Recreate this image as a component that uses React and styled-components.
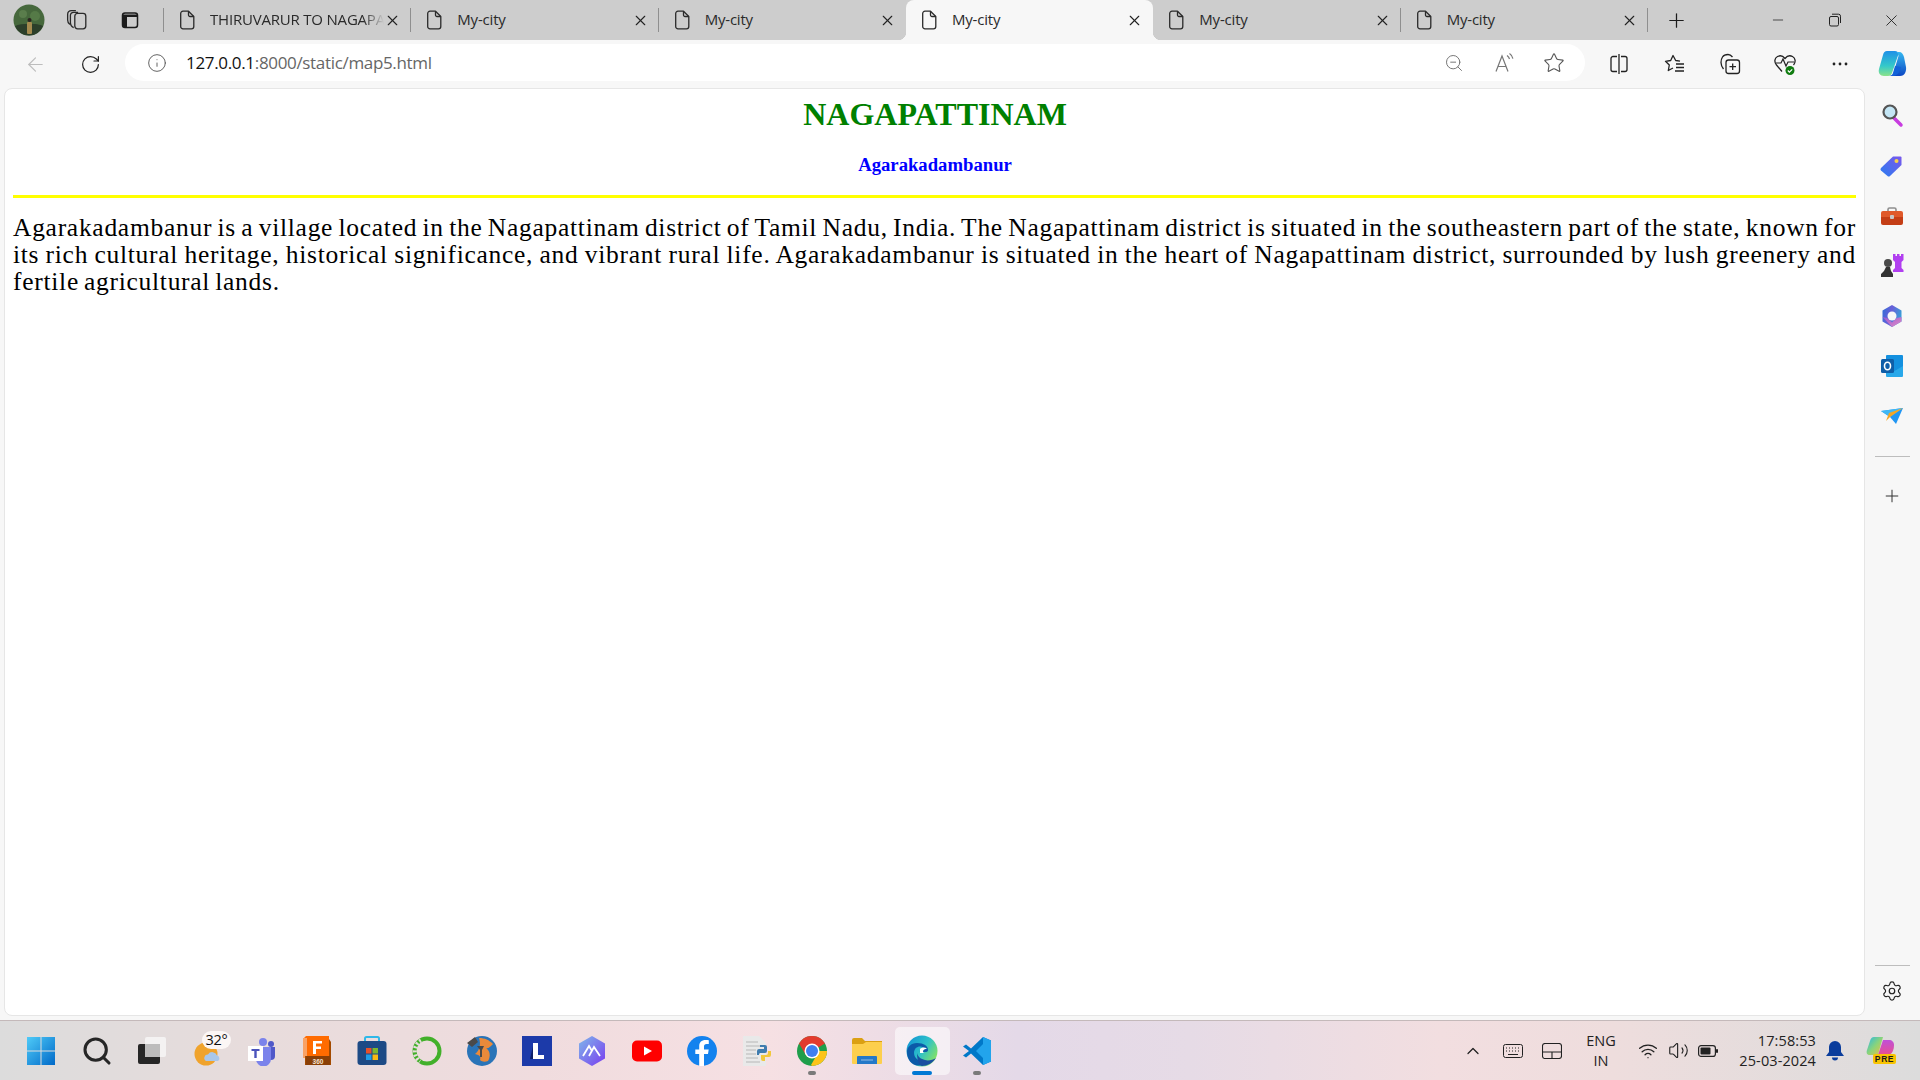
import React from "react";
import styled, { createGlobalStyle } from "styled-components";
import { ArrowLeft, ChevronUp, Info, Minus, Plus, RotateCw, Search, Settings, Star, Volume2, Wifi, X, ZoomOut } from "lucide-react";

const GlobalStyle = createGlobalStyle`
    html, body {
        margin: 0;
        padding: 0;
        overflow: hidden;
    }
    * {
        box-sizing: border-box;
    }
`

const Screen = styled.div`
    width: 1920px;
    height: 1080px;
    display: flex;
    flex-direction: column;
    background-color: #f7f7f7;
    font-family: "Open Sans", "Noto Sans", sans-serif;
`

const TabStrip = styled.div`
    height: 40px;
    flex: none;
    display: flex;
    align-items: stretch;
    background-color: #cdcdcd;
    color: #1c1c1c;
`

const StripButton = styled.div`
    width: ${(p) => p.$w}px;
    display: flex;
    align-items: center;
    justify-content: center;
    flex: none;
`

const StripDivider = styled.div`
    width: 1px;
    height: 24px;
    align-self: center;
    background-color: #8f8f8f;
    flex: none;
`

const Tabs = styled.div`
    width: 1484px;
    display: grid;
    grid-template-columns: repeat(6, minmax(0, 1fr));
    flex: none;
`

const Tab = styled.div`
    position: relative;
    display: flex;
    align-items: center;
    min-width: 0;
    padding: 0 10px 0 14px;
    background-color: ${(p) => (p.$active ? "#f7f7f7" : "transparent")};
    border-radius: ${(p) => (p.$active ? "8px 8px 0 0" : "0")};

    &::after {
        content: "";
        display: ${(p) => (p.$divider ? "block" : "none")};
        position: absolute;
        right: 0;
        top: 8px;
        width: 1px;
        height: 24px;
        background-color: #8f8f8f;
    }
`

const TabFoot = styled.span`
    position: absolute;
    bottom: 0;
    ${(p) => p.$side}: -8px;
    width: 8px;
    height: 8px;
    background: radial-gradient(circle at ${(p) => (p.$side === "left" ? "0 0" : "100% 0")}, transparent 8px, #f7f7f7 8.5px);
`

const TabTitle = styled.span`
    flex: 1;
    min-width: 0;
    margin-left: 14px;
    padding-bottom: 2px;
    font-size: 15px;
    letter-spacing: -0.2px;
    white-space: nowrap;
    overflow: hidden;
    color: #2a2a2a;
    mask-image: ${(p) => (p.$fade ? "linear-gradient(to right, #000 88%, transparent 100%)" : "none")};
`

const WindowControls = styled.div`
    margin-left: auto;
    display: flex;
    flex: none;
`

const WindowButton = styled.div`
    width: 57px;
    display: flex;
    align-items: center;
    justify-content: center;
    flex: none;
`

const Toolbar = styled.div`
    height: 48px;
    flex: none;
    display: flex;
    align-items: center;
    background-color: #f7f7f7;
    color: #222;
`

const ToolButton = styled.div`
    width: ${(p) => p.$w || 55}px;
    display: flex;
    align-items: center;
    justify-content: center;
    flex: none;
`

const AddressBar = styled.div`
    width: 1460px;
    height: 37px;
    margin-top: -3px;
    flex: none;
    display: flex;
    align-items: center;
    padding: 0 0 0 22px;
    background-color: #ffffff;
    border-radius: 19px;
    color: #666;
`

const Url = styled.div`
    flex: 1;
    margin-left: 19px;
    font-size: 17px;
    letter-spacing: -0.33px;
    color: #666;

    b {
        font-weight: 400;
        color: #111;
    }
`

const AddressAction = styled.div`
    width: 50px;
    display: flex;
    align-items: center;
    justify-content: center;
    margin-top: 1px;
`

const Body = styled.div`
    flex: 1;
    min-height: 0;
    display: flex;
    padding-bottom: 4px;
`

const Page = styled.main`
    width: 1861px;
    margin-left: 4px;
    padding: 0 8px;
    background-color: #ffffff;
    border: 1px solid #e6e6e6;
    border-radius: 8px;
    font-family: "Liberation Serif", "Times New Roman", serif;
    color: #000;
`

const Heading = styled.h1`
    margin: 7px 0 0 0;
    padding-left: 1px;
    font-size: 32px;
    line-height: 37px;
    font-weight: 700;
    text-align: center;
    color: #008000;
`

const SubHeading = styled.h3`
    margin: 21px 0 0 0;
    padding-left: 1px;
    font-size: 18.7px;
    line-height: 21px;
    font-weight: 700;
    text-align: center;
    color: #0000ff;
`

const Rule = styled.div`
    height: 3px;
    margin-top: 20px;
    background-color: #ffff00;
`

const Paragraph = styled.p`
    margin: 16px 0 0 0;
    font-size: 25.5px;
    line-height: 27px;
    letter-spacing: 0.72px;
    word-spacing: -2px;
    text-align: justify;
`

const Sidebar = styled.aside`
    flex: 1;
    display: flex;
    flex-direction: column;
    align-items: center;
    padding-top: 3px;
    padding-right: 1px;
`

const SideSlot = styled.div`
    height: ${(p) => p.$h || 50}px;
    width: 100%;
    flex: none;
    display: flex;
    align-items: center;
    justify-content: center;
`

const SideDivider = styled.div`
    width: 35px;
    height: 1px;
    flex: none;
    background-color: #bdbdbd;
    margin-top: ${(p) => p.$top};
`

const Taskbar = styled.footer`
    height: 60px;
    flex: none;
    display: flex;
    align-items: center;
    padding: 0 24px 0 14.5px;
    border-top: 1px solid #c4b9ba;
    background: linear-gradient(to right, #dcdcdc 0%, #e8dcdc 14%, #f0dcde 28%, #f6e0e3 40%, #e4d9e8 53%, #e6dbe6 62%, #f2dee0 75%, #eedddd 84%, #dcdcdc 100%);
`

const TaskSlot = styled.div`
    position: relative;
    width: 55px;
    height: 48px;
    flex: none;
    display: flex;
    align-items: center;
    justify-content: center;
    border-radius: 5px;
    background-color: ${(p) => (p.$active ? "rgba(255, 255, 255, 0.55)" : "transparent")};

    &::after {
        content: "";
        display: ${(p) => (p.$state ? "block" : "none")};
        position: absolute;
        bottom: 0;
        left: 50%;
        transform: translateX(-50%);
        width: ${(p) => (p.$state === "active" ? 20 : 8)}px;
        height: 4px;
        border-radius: 2px;
        background-color: ${(p) => (p.$state === "active" ? "#0078d4" : "#7a7a7a")};
    }
`

const WeatherBadge = styled.span`
    position: absolute;
    top: 4px;
    left: 22px;
    padding: 0 4px;
    font-size: 14.5px;
    line-height: 18px;
    letter-spacing: -0.3px;
    border-radius: 9px;
    color: #111;
    background-color: #fbf6f5;
`

const Tray = styled.div`
    margin-left: auto;
    display: flex;
    align-items: center;
    color: #222;
`

const TrayIcon = styled.div`
    width: ${(p) => p.$w}px;
    margin-left: ${(p) => p.$left || 0}px;
    display: flex;
    align-items: center;
    justify-content: center;
    flex: none;
`

const Lang = styled.div`
    width: 60px;
    text-align: center;
    font-size: 14.5px;
    line-height: 20px;
    color: #222;
    flex: none;
`

const Clock = styled.div`
    width: 93px;
    text-align: right;
    font-size: 14.5px;
    line-height: 20px;
    letter-spacing: 0.1px;
    color: #222;
    white-space: nowrap;
    flex: none;
`

const Avatar = () => (
    <svg width="32" height="32" viewBox="0 0 32 32">
        <circle cx="16" cy="16" r="15.5" fill="#46683c" />
        <path d="M2 22a15 15 0 0 0 28 0c-5-3-22-3-28 0z" fill="#2c3f2a" />
        <circle cx="10" cy="10" r="4" fill="#5a7d4c" />
        <circle cx="22" cy="12" r="5" fill="#557a47" />
        <rect x="14" y="18" width="5" height="12" rx="1" fill="#a38a4e" />
        <circle cx="16.5" cy="16" r="2" fill="#2a2320" />
    </svg>
)

const Workspaces = () => (
    <svg width="22" height="22" viewBox="0 0 20 20" fill="none" stroke="#2a2a2a" strokeWidth="1.2">
        <rect x="8" y="4" width="10" height="14" rx="2.5" />
        <path d="M7 17c-2-1-3-3-3-5V6c0-2 1-3 3-3h4" />
        <path d="M3.5 14C2 13 1.5 11 1.5 10V5c0-2 1.5-3.5 3.5-3.5h4" />
    </svg>
)

const TabActions = () => (
    <svg width="20" height="20" viewBox="0 0 20 20" fill="none" stroke="#1c1c1c" strokeWidth="1.5">
        <rect x="2.5" y="3" width="15" height="14.5" rx="2.5" />
        <path d="M3 4.5h14v2.5H7v10H3z" fill="#1c1c1c" stroke="none" />
    </svg>
)

const DocIcon = () => (
    <svg width="18" height="20" viewBox="0 0 18 20" fill="none" stroke="#2a2a2a" strokeWidth="1.3" strokeLinejoin="round">
        <path d="M5 1.2h5.5L15.8 6.5V16.5a2.3 2.3 0 0 1-2.3 2.3H5a2.3 2.3 0 0 1-2.3-2.3V3.5A2.3 2.3 0 0 1 5 1.2z" />
        <path d="M10.5 1.2V5a1.5 1.5 0 0 0 1.5 1.5h3.8" />
    </svg>
)

const RestoreIcon = () => (
    <svg width="14" height="14" viewBox="0 0 14 14" fill="none" stroke="#222" strokeWidth="1">
        <rect x="1.5" y="3.5" width="9" height="9.5" rx="1.5" />
        <path d="M4 1.2h6.5a2 2 0 0 1 2 2V10" />
    </svg>
)

const ReadAloud = () => (
    <svg width="22" height="22" viewBox="0 0 22 22" fill="none" stroke="#777" strokeWidth="1.2">
        <path d="M3 19.5L9 4l6 15.5M5 14.5h8" />
        <path d="M14 3.5c1.5 1 2.2 2.2 2.5 3.5M16.5 1.5c2 1.3 3 3.2 3.4 5.2" />
    </svg>
)

const SplitScreen = () => (
    <svg width="20" height="22" viewBox="0 0 20 22" fill="none" stroke="#222" strokeWidth="1.3">
        <path d="M8 3.5H4a2 2 0 0 0-2 2v11a2 2 0 0 0 2 2h4M12 3.5h4a2 2 0 0 1 2 2v11a2 2 0 0 1-2 2h-4" />
        <path d="M10 1v20" />
    </svg>
)

const Favourites = () => (
    <svg width="22" height="22" viewBox="0 0 22 22" fill="none" stroke="#222" strokeWidth="1.3" strokeLinejoin="round">
        <path d="M16 8.200L11.700 7.500 9 2.500 6.700 7.500 1.500 8.300l3.800 3.700-1 5.500 4.700-2.500" />
        <path d="M12 11h8M12 14.500h8M11 18h9" />
    </svg>
)

const Collections = () => (
    <svg width="22" height="22" viewBox="0 0 22 22" fill="none" stroke="#222" strokeWidth="1.3">
        <rect x="7" y="7" width="13.5" height="13.5" rx="2.5" />
        <path d="M13.7 10.5v6.5M10.5 13.7H17" />
        <path d="M4.5 16C3 14 2 12 2 9.5 2 7 2.5 5.5 3.5 4S7 1.5 9 1.5s3 .7 4.5 2.5" />
    </svg>
)

const Health = () => (
    <svg width="24" height="24" viewBox="0 0 24 24" fill="none">
        <path d="M9 19.5L3.5 13C1 10 1.5 6 4.5 4.5S10 4 12 6.5c2-2.500 4.500-3.500 7.500-2S23 10 20.500 13" stroke="#222" strokeWidth="1.3" />
        <path d="M3 11h5l2-4 3 7 2-4h6" stroke="#222" strokeWidth="1.2" />
        <circle cx="17" cy="18.500" r="4.500" fill="#107c10" />
        <path d="M14.800 18.500l1.600 1.600 2.800-2.800" stroke="#fff" strokeWidth="1.200" />
    </svg>
)

const Dots = () => (
    <svg width="16" height="4" viewBox="0 0 16 4" fill="#222">
        <circle cx="2" cy="2" r="1.400" />
        <circle cx="8" cy="2" r="1.400" />
        <circle cx="14" cy="2" r="1.400" />
    </svg>
)

const CopilotMark = ({ size = 30 }) => (
    <svg width={size} height={size} viewBox="0 0 30 30">
        <defs>
            <linearGradient id="copA" x1="0" y1="0" x2="0" y2="1">
                <stop offset="0" stopColor="#1e90e8" />
                <stop offset="0.6" stopColor="#35c9c9" />
                <stop offset="1" stopColor="#8be28a" />
            </linearGradient>
            <linearGradient id="copB" x1="0" y1="0" x2="0" y2="1">
                <stop offset="0" stopColor="#35b8f0" />
                <stop offset="1" stopColor="#0d47c4" />
            </linearGradient>
        </defs>
        <path d="M10 2h8c2 0 3 1 3.500 3L15 24c-.7 2-2 3-4 3H7c-4 0-6-3-5-7l4-14c.6-2.500 2-4 4-4z" fill="url(#copA)" />
        <path d="M19 3h3c3 0 4 2 5 5l2 10c.6 4-1 9-6 9H13c2 0 3-1 3.500-3l5-17c-.4-2-1-4-2.500-4z" fill="url(#copB)" />
        <path d="M12 27c2 0 3.500-1 4-3l2-7 6 1c-1 5-4 9-8 9z" fill="#1262d8" />
    </svg>
)

const MagnifierApp = () => (
    <svg width="24" height="24" viewBox="0 0 24 24">
        <path d="M14 14l7 7" stroke="#c83ce0" strokeWidth="3.500" strokeLinecap="round" />
        <circle cx="10" cy="8" r="6.500" fill="#c4e6f5" stroke="#555" strokeWidth="2.200" />
    </svg>
)

const TagApp = () => (
    <svg width="24" height="24" viewBox="0 0 24 24">
        <defs>
            <linearGradient id="tag" x1="0" y1="1" x2="1" y2="0">
                <stop offset="0" stopColor="#2a7cf0" />
                <stop offset="1" stopColor="#7a58ec" />
            </linearGradient>
        </defs>
        <path d="M1 14L13 2.500h7.500a1 1 0 0 1 1 1V11L10 22a2 2 0 0 1-2.500 0L1 16.500a2 2 0 0 1 0-2.500z" fill="url(#tag)" />
        <circle cx="16.500" cy="7" r="2" fill="#f6d24a" />
    </svg>
)

const ToolboxApp = () => (
    <svg width="24" height="24" viewBox="0 0 24 24">
        <path d="M8 8V5.500A1.500 1.500 0 0 1 9.500 4h5A1.500 1.500 0 0 1 16 5.500V8" fill="none" stroke="#8e8e8e" strokeWidth="1.600" />
        <path d="M1 9a2 2 0 0 1 2-2h18a2 2 0 0 1 2 2v4H1z" fill="#e0592a" />
        <path d="M1 13h22v6a2 2 0 0 1-2 2H3a2 2 0 0 1-2-2z" fill="#c43e16" />
        <rect x="10" y="11" width="4" height="4" rx="1" fill="#c8c8c8" />
    </svg>
)

const ChessApp = () => (
    <svg width="24" height="24" viewBox="0 0 24 24">
        <path d="M13 0h2.500v2H17V0h2.500v2H21V0h2.500v6l-2 2v6l2 2v2H13v-2l2-2V8l-2-2z" fill="#b13ff0" />
        <circle cx="8" cy="9" r="4" fill="#4a4a4a" />
        <path d="M6 13h4l1 4 2 3v3H1v-3l3-3z" fill="#333" />
    </svg>
)

const M365App = () => (
    <svg width="24" height="24" viewBox="0 0 24 24">
        <defs>
            <linearGradient id="m365a" x1="0" y1="0" x2="1" y2="0.300">
                <stop offset="0" stopColor="#2d6fd8" />
                <stop offset="0.500" stopColor="#6a5fd8" />
                <stop offset="1" stopColor="#3a9ad8" />
            </linearGradient>
            <linearGradient id="m365b" x1="0" y1="0" x2="1" y2="1">
                <stop offset="0" stopColor="#9a5ad0" />
                <stop offset="1" stopColor="#e08ac8" />
            </linearGradient>
        </defs>
        <path d="M12 1l9.500 5.500v11L12 23l-9.500-5.500v-11z" fill="url(#m365a)" />
        <path d="M2.500 13l9.500 10 9.500-5.500V13l-5 1-4.500 4.500L7 14z" fill="url(#m365b)" />
        <circle cx="12" cy="12" r="4.500" fill="#f7f7f7" />
    </svg>
)

const OutlookApp = () => (
    <svg width="24" height="24" viewBox="0 0 24 24">
        <rect x="6" y="1" width="17" height="20" rx="1" fill="#1490df" />
        <path d="M6 12l8.500 5 8.500-5v10a1 1 0 0 1-1 1H7a1 1 0 0 1-1-1z" fill="#28a8ea" />
        <rect x="1" y="5" width="13" height="14" rx="1.500" fill="#0f5ea8" />
        <ellipse cx="7.500" cy="12" rx="3" ry="3.800" fill="none" stroke="#fff" strokeWidth="1.600" />
    </svg>
)

const SendApp = () => (
    <svg width="24" height="24" viewBox="0 0 24 24">
        <path d="M1 7l22-3-7 16-6-7z" fill="#2196f3" />
        <path d="M1 7l22-3-13 9z" fill="#40b8f5" />
        <path d="M6 17l4-4 13-9L9 9z" fill="#f5a623" />
    </svg>
)

const WindowsLogo = () => (
    <svg width="30" height="30" viewBox="1 0 30 30">
        <defs>
            <linearGradient id="win" x1="0" y1="0" x2="1" y2="1">
                <stop offset="0" stopColor="#4fcbf8" />
                <stop offset="1" stopColor="#0069c8" />
            </linearGradient>
        </defs>
        <path d="M1 1h13.500v13.500H1zM15.500 1H29v13.500H15.500zM1 15.500h13.500V29H1zM15.500 15.500H29V29H15.500z" fill="url(#win)" />
    </svg>
)

const TaskView = () => (
    <svg width="30" height="30" viewBox="0 0 30 30">
        <rect x="8" y="1" width="21" height="20" rx="2" fill="#f4f2f2" />
        <rect x="1" y="8" width="22" height="20" rx="2" fill="#262626" />
        <rect x="8" y="8" width="15" height="13" fill="#bdbcbc" />
    </svg>
)

const Weather = () => (
    <svg width="30" height="30" viewBox="0 0 30 30">
        <circle cx="14" cy="18" r="11.500" fill="#f0a32c" />
        <path d="M14 25a3.500 3.500 0 0 1 2-6.500 5 5 0 0 1 9 1 3 3 0 0 1 1 5.500z" fill="#a9c7ea" />
    </svg>
)

const Teams = () => (
    <svg width="30" height="30" viewBox="0 0 30 30">
        <circle cx="16" cy="6" r="4" fill="#7b83eb" />
        <circle cx="24" cy="8" r="3" fill="#5059c9" />
        <path d="M20 11h8v9a4 4 0 0 1-8 0z" fill="#5059c9" />
        <path d="M9 11h15v12a6 6 0 0 1-15 0z" fill="#7b83eb" />
        <rect x="1" y="10" width="15" height="15" fill="#fff" />
        <path d="M4.500 13h8v2H9.700v7H7.300v-7H4.500z" fill="#4b53bc" />
    </svg>
)

const Fusion = () => (
    <svg width="30" height="30" viewBox="0 0 30 30">
        <path d="M1 3l3-3h23v20H1z" fill="#ff6b00" />
        <path d="M1 2l4 0v20H1z" fill="#f9a265" />
        <path d="M27 3l2 3v23H3v-9h24z" fill="#a34a00" />
        <rect x="4" y="20" width="24" height="9" fill="#8a3f06" />
        <path d="M11 5h9v2.500h-6v3h5V13h-5v5h-3z" fill="#fff" />
        <text x="16" y="28" textAnchor="middle" fontSize="6.500" fontWeight="700" fill="#f3e3d3" fontFamily="Liberation Sans, sans-serif">360</text>
    </svg>
)

const Store = () => (
    <svg width="30" height="30" viewBox="0 0 30 30">
        <path d="M8 6V2.500A1.500 1.500 0 0 1 9.500 1h11A1.500 1.500 0 0 1 22 2.500V6" fill="none" stroke="#2fb8e8" strokeWidth="2" />
        <rect x="0.500" y="5" width="29" height="24" rx="3" fill="#1d4a85" />
        <rect x="9" y="12" width="5.500" height="5.500" fill="#e8502a" />
        <rect x="15.500" y="12" width="5.500" height="5.500" fill="#7cb82f" />
        <rect x="9" y="18.500" width="5.500" height="5.500" fill="#1e9de8" />
        <rect x="15.500" y="18.500" width="5.500" height="5.500" fill="#f9b912" />
    </svg>
)

const GreenRing = () => (
    <svg width="30" height="30" viewBox="0 0 30 30" fill="none">
        <circle cx="15" cy="15" r="12.500" stroke="#42b02a" strokeWidth="4" />
        <path d="M9 4.500A12.500 12.500 0 0 0 8 25.500" stroke="#e7dcdc" strokeWidth="4" strokeDasharray="2 2" />
    </svg>
)

const Blender = () => (
    <svg width="30" height="30" viewBox="0 0 30 30">
        <circle cx="15" cy="15" r="15" fill="#2a74b8" />
        <path d="M8 18c5-4 6-10 4-16 6 0 10 2 14 6-3 3-5 5-7 4 4 3 5 8 2 13-3 1-6 1-8-1 1-3 0-5-5-6z" fill="#ea8a3a" />
        <path d="M0 7l8-6 3 5-6 5zM10 10h7l-2 4v7h-2v-7z" fill="#4a4a4a" />
    </svg>
)

const LetterL = () => (
    <svg width="30" height="30" viewBox="0 0 30 30">
        <rect width="30" height="30" fill="#1c3aa9" />
        <path d="M11 7h5v12h6v4H11z" fill="#fff" />
        <path d="M11 10v13H8z" fill="#0e1f66" />
    </svg>
)

const Mesh = () => (
    <svg width="30" height="30" viewBox="0 0 30 30">
        <defs>
            <linearGradient id="mesh" x1="0" y1="0" x2="1" y2="1">
                <stop offset="0" stopColor="#7fb8ea" />
                <stop offset="1" stopColor="#7a3cf0" />
            </linearGradient>
        </defs>
        <path d="M15 0l13 7.500v15L15 30 2 22.500v-15z" fill="url(#mesh)" />
        <path d="M6 20l6-10 3 5M12 20l5-9 6 9" fill="none" stroke="#fff" strokeWidth="1.800" />
    </svg>
)

const YouTube = () => (
    <svg width="30" height="22" viewBox="0 0 30 22">
        <rect width="30" height="21" y="0.500" rx="5" fill="#ff0000" />
        <path d="M12 6.500l8 4.500-8 4.500z" fill="#fff" />
    </svg>
)

const Facebook = () => (
    <svg width="30" height="30" viewBox="0 0 30 30">
        <circle cx="15" cy="15" r="15" fill="#1382ee" />
        <path d="M17 30V18h4l.7-4.500H17v-3c0-1.500.7-2.500 2.500-2.500h2.300V4.200C21 4 19.800 4 18.500 4c-3.800 0-6.300 2.200-6.300 6.200v3.300H8.300V18h3.900v12z" fill="#fff" />
    </svg>
)

const PythonFile = () => (
    <svg width="30" height="30" viewBox="0 0 30 30">
        <path d="M1 0h16l7 7v23H1z" fill="#e9e9e9" />
        <path d="M4 6h12M4 10h14M4 14h10M4 18h10M4 22h12M4 26h14" stroke="#c8c8c8" strokeWidth="1.500" />
        <path d="M15 19v-4a2 2 0 0 1 2-2h5v-2h-4V9h5a2 2 0 0 1 2 2v4a2 2 0 0 1-2 2h-5a2 2 0 0 0-1 2z" fill="#3f7cae" />
        <path d="M29 15v4a2 2 0 0 1-2 2h-4v4h-2a2 2 0 0 1-2-2v-4h5a2 2 0 0 0 2-2v-2h3z" fill="#f2c83c" />
    </svg>
)

const Chrome = () => (
    <svg width="30" height="30" viewBox="0 0 30 30">
        <circle cx="15" cy="15" r="15" fill="#1f9e4b" />
        <path d="M15 15L28 7.500A15 15 0 0 0 2 7.500l6.500 11z" fill="#e33b2e" />
        <path d="M15 15h15A15 15 0 0 1 15 30l-1-1 7.500-13z" fill="#fcc419" />
        <circle cx="15" cy="15" r="7.500" fill="#fff" />
        <circle cx="15" cy="15" r="6" fill="#3f7ff0" />
    </svg>
)

const Folder = () => (
    <svg width="30" height="28" viewBox="0 0 30 28">
        <path d="M0 3a2 2 0 0 1 2-2h8l3 3h17v20H0z" fill="#dba013" />
        <path d="M0 7h11l3-2h16v21a1 1 0 0 1-1 1H1a1 1 0 0 1-1-1z" fill="#fdcf4d" />
        <path d="M5 20a1 1 0 0 1 1-1h18a1 1 0 0 1 1 1v7H5z" fill="#2478c8" />
        <path d="M9 23h12" stroke="#fff" strokeOpacity="0.500" strokeWidth="1" />
    </svg>
)

const Edge = () => (
    <svg width="32" height="32" viewBox="0 0 32 32">
        <defs>
            <linearGradient id="edgeA" x1="0" y1="0" x2="1" y2="0.600">
                <stop offset="0" stopColor="#0f8fd6" />
                <stop offset="0.600" stopColor="#2fc2c8" />
                <stop offset="1" stopColor="#7fe06a" />
            </linearGradient>
        </defs>
        <circle cx="16" cy="16" r="15.500" fill="url(#edgeA)" />
        <path d="M1 17c0-5 4-9 10-9 7 0 11 3 11 7 0 1.500-1 2-3 2h-5c-1-3 4-3 4-4-3-3-10-2-10 5 0 6 7 10 14 9-3 3-7 4-10 3.500C6 30.500 1 25 1 17z" fill="#0c5aa8" />
        <path d="M14 14c2-2 5-2 7-.5-2 .5-4 1-4 3 0 1 1 1.500 2 1.500h-5z" fill="#fff" />
        <path d="M16 31c5 0 11-3 14-8-3 2-8 3-11 2-4-1-7-3-8-7 0 7 2 12 5 13z" fill="#1a4fa0" />
    </svg>
)

const VSCode = () => (
    <svg width="30" height="30" viewBox="0 0 30 30">
        <path d="M21 1l8 3.500v21L21 29 9 17.500l-5 4-3-2 6-4.500-6-4.500 3-2 5 4z" fill="#0078c8" />
        <path d="M21 1l8 3.500v21L21 29zM21 8l-7 7 7 7z" fill="#22a4ec" fillRule="evenodd" />
    </svg>
)

const KeyboardIcon = () => (
    <svg width="20" height="14" viewBox="0 0 20 14" fill="none" stroke="#222" strokeWidth="1">
        <rect x="0.500" y="0.500" width="19" height="13" rx="2" />
        <path d="M3 4h1M6 4h1M9 4h1M12 4h1M15 4h1M3 7h1M6 7h1M9 7h1M12 7h1M15 7h1M5 10.500h10" />
    </svg>
)

const TouchpadIcon = () => (
    <svg width="20" height="16" viewBox="0 0 20 16" fill="none" stroke="#222" strokeWidth="1.100">
        <rect x="0.500" y="0.500" width="19" height="15" rx="2.500" />
        <path d="M0.500 9h19M10 9v6.500" />
    </svg>
)

const BatteryIcon = () => (
    <svg width="20" height="12" viewBox="0 0 20 12">
        <rect x="0.600" y="0.600" width="16.800" height="10.800" rx="2.500" fill="none" stroke="#222" strokeWidth="1.200" />
        <rect x="2.500" y="2.500" width="10" height="7" rx="1" fill="#222" />
        <rect x="18" y="4" width="2" height="4" rx="1" fill="#222" />
    </svg>
)

const BellIcon = () => (
    <svg width="18" height="20" viewBox="0 0 18 20" fill="#0b3d9c">
        <path d="M9 0a6 6 0 0 1 6 6v5l3 4H0l3-4V6a6 6 0 0 1 6-6z" />
        <path d="M6 16.500h6a3 3 0 0 1-6 0z" />
    </svg>
)

const CopilotPre = () => (
    <svg width="30" height="28" viewBox="0 0 30 28">
        <defs>
            <linearGradient id="preA" x1="0" y1="0" x2="1" y2="1">
                <stop offset="0" stopColor="#28b8e8" />
                <stop offset="0.500" stopColor="#8ad47a" />
                <stop offset="1" stopColor="#f0c040" />
            </linearGradient>
            <linearGradient id="preB" x1="0" y1="0" x2="0" y2="1">
                <stop offset="0" stopColor="#c050d8" />
                <stop offset="1" stopColor="#e84f90" />
            </linearGradient>
        </defs>
        <path d="M8 0h9l-5 18H4c-3 0-4-2-3-5L4 4c.8-2.500 2-4 4-4z" fill="url(#preA)" />
        <path d="M17 3h6c3 0 5 2 5 5 0 5-2 10-7 10H12z" fill="url(#preB)" />
        <rect x="7" y="17" width="23" height="10" rx="2" fill="#f8c400" />
        <text x="18.500" y="25" textAnchor="middle" fontSize="8.500" fontWeight="700" letterSpacing="0.600" fill="#1a1a1a" fontFamily="Liberation Sans, sans-serif">PRE</text>
    </svg>
)

const tabs = [
    { title: "THIRUVARUR TO NAGAPATTINAM", fade: true, divider: true },
    { title: "My-city", divider: true },
    { title: "My-city" },
    { title: "My-city", active: true },
    { title: "My-city", divider: true },
    { title: "My-city", divider: true },
]

const sideApps = [MagnifierApp, TagApp, ToolboxApp, ChessApp, M365App, OutlookApp, SendApp]

const taskApps = [
    { Icon: WindowsLogo },
    { Icon: () => <Search size={32} strokeWidth={2.3} color="#262626" /> },
    { Icon: TaskView },
    { Icon: Weather, badge: "32°" },
    { Icon: Teams },
    { Icon: Fusion },
    { Icon: Store },
    { Icon: GreenRing },
    { Icon: Blender },
    { Icon: LetterL },
    { Icon: Mesh },
    { Icon: YouTube },
    { Icon: Facebook },
    { Icon: PythonFile },
    { Icon: Chrome, state: "open" },
    { Icon: Folder },
    { Icon: Edge, state: "active", active: true },
    { Icon: VSCode, state: "open" },
]

const App = () => {
    return (
        <Screen>
            <GlobalStyle />
            <TabStrip>
                <StripButton $w={57}><Avatar /></StripButton>
                <StripButton $w={40}><Workspaces /></StripButton>
                <StripButton $w={66}><TabActions /></StripButton>
                <StripDivider />
                <Tabs>
                    {tabs.map((tab, i) => (
                        <Tab key={i} $active={tab.active} $divider={tab.divider}>
                            {tab.active && <TabFoot $side="left" />}
                            <DocIcon />
                            <TabTitle $fade={tab.fade}>{tab.title}</TabTitle>
                            <X size={17} strokeWidth={1.6} color="#222" />
                            {tab.active && <TabFoot $side="right" />}
                        </Tab>
                    ))}
                </Tabs>
                <StripButton $w={56}><Plus size={23} strokeWidth={1.3} /></StripButton>
                <WindowControls>
                    <WindowButton><Minus size={16} strokeWidth={1.1} /></WindowButton>
                    <WindowButton><RestoreIcon /></WindowButton>
                    <WindowButton><X size={19} strokeWidth={1.1} /></WindowButton>
                </WindowControls>
            </TabStrip>

            <Toolbar>
                <ToolButton $w={70}><ArrowLeft size={23} strokeWidth={1.2} color="#bdbdbd" /></ToolButton>
                <ToolButton $w={40}><RotateCw size={21} strokeWidth={1.4} /></ToolButton>
                <ToolButton $w={15} />
                <AddressBar>
                    <Info size={20} strokeWidth={1.1} color="#555" />
                    <Url><b>127.0.0.1</b>:8000/static/map5.html</Url>
                    <AddressAction><ZoomOut size={20} strokeWidth={1.2} color="#777" /></AddressAction>
                    <AddressAction><ReadAloud /></AddressAction>
                    <AddressAction><Star size={22} strokeWidth={1.2} color="#555" /></AddressAction>
                    <ToolButton $w={6} />
                </AddressBar>
                <ToolButton $w={6} />
                <ToolButton $w={56}><SplitScreen /></ToolButton>
                <ToolButton><Favourites /></ToolButton>
                <ToolButton><Collections /></ToolButton>
                <ToolButton><Health /></ToolButton>
                <ToolButton><Dots /></ToolButton>
                <ToolButton $w={49}><CopilotMark /></ToolButton>
            </Toolbar>

            <Body>
                <Page>
                    <Heading>NAGAPATTINAM</Heading>
                    <SubHeading>Agarakadambanur</SubHeading>
                    <Rule />
                    <Paragraph>
                        Agarakadambanur is a village located in the Nagapattinam district of Tamil Nadu, India. The Nagapattinam district is situated in the southeastern part of the state, known for its rich cultural heritage, historical significance, and vibrant rural life. Agarakadambanur is situated in the heart of Nagapattinam district, surrounded by lush greenery and fertile agricultural lands.
                    </Paragraph>
                </Page>
                <Sidebar>
                    {sideApps.map((Icon, i) => (
                        <SideSlot key={i}><Icon /></SideSlot>
                    ))}
                    <SideDivider $top="15px" />
                    <SideSlot $h={78}><Plus size={20} strokeWidth={1.2} color="#333" /></SideSlot>
                    <SideDivider $top="auto" />
                    <SideSlot><Settings size={22} strokeWidth={1.3} color="#222" /></SideSlot>
                </Sidebar>
            </Body>

            <Taskbar>
                {taskApps.map(({ Icon, badge, state, active }, i) => (
                    <TaskSlot key={i} $state={state} $active={active}>
                        <Icon />
                        {badge && <WeatherBadge>{badge}</WeatherBadge>}
                    </TaskSlot>
                ))}
                <Tray>
                    <TrayIcon $w={40}><ChevronUp size={20} strokeWidth={1.5} /></TrayIcon>
                    <TrayIcon $w={40}><KeyboardIcon /></TrayIcon>
                    <TrayIcon $w={38}><TouchpadIcon /></TrayIcon>
                    <Lang>ENG<br />IN</Lang>
                    <TrayIcon $w={30} $left={2}><Wifi size={20} strokeWidth={1.6} /></TrayIcon>
                    <TrayIcon $w={30}><Volume2 size={21} strokeWidth={1.3} /></TrayIcon>
                    <TrayIcon $w={30}><BatteryIcon /></TrayIcon>
                    <Clock>17:58:53<br />25-03-2024</Clock>
                    <TrayIcon $w={30} $left={4}><BellIcon /></TrayIcon>
                    <TrayIcon $w={30} $left={16}><CopilotPre /></TrayIcon>
                </Tray>
            </Taskbar>
        </Screen>
    )
}

export default App
